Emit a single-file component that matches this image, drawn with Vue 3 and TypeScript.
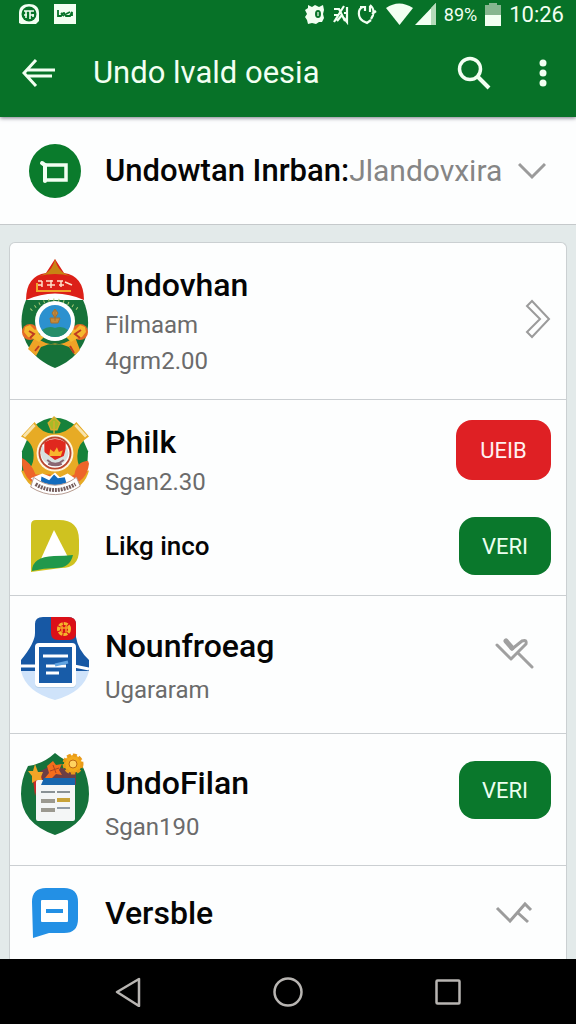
<script setup lang="ts">
import { ref } from 'vue'

const title = 'Undo lvald oesia'
const expanded = ref(false)
const first = { title: 'Undovhan', lines: ['Filmaam', '4grm2.00'] }
</script>

<template>
  <div class="screen">
    <header class="top">
      <div class="status">
        <div class="status-group">
          <svg width="22" height="22" viewBox="0 0 22 22">
            <path d="M1 20V10C1 4 5 1 11 1s10 3 10 9v8l-3 3H3z" fill="#f2fff2" />
            <circle cx="11" cy="11" r="7.5" fill="#077329" />
            <path d="M6 8h10M8 8v7M12 8v8M15 11v3M6 12h3M12 12h4" stroke="#f2fff2" stroke-width="1.6" fill="none" />
          </svg>
          <svg width="22" height="20" viewBox="0 0 22 20">
            <path d="M0 0h22v20H0z" fill="#f2fff2" />
            <path d="M4 6v6h3q2-3 3-3l2 3h4l2-4v4M7 9l3 3M12 10l4-2" stroke="#077329" stroke-width="1.8" fill="none" />
          </svg>
        </div>
        <div class="status-group right">
          <svg width="20" height="22" viewBox="0 0 20 22">
            <path d="M3 2l4 2 3-2 4 2 4-2 1 5-1 4 1 4-2 4-3 0-3 2-4-1-4 1-1-4-2-3 2-3-2-4 3-2z" fill="#f2fff2" />
            <ellipse cx="13" cy="11" rx="3" ry="4" fill="#077329" /><path d="M13 9v4" stroke="#b5dcbc" stroke-width="1.6" />
          </svg>
          <svg width="16" height="22" viewBox="0 0 16 22">
            <path d="M1 6h5l6 12M1 19L11 3M1 12h5M4 18l5-6M14 4v15l-3-4M11 10h3" stroke="#f2fff2" stroke-width="2.2" fill="none" />
          </svg>
          <svg width="21" height="22" viewBox="0 0 21 22">
            <path d="M6 4C0 6 1 15 6 18l4 2 4-3M3 4h5v4M13 2c5 4 4 10 1 14M13 3v6M19 8l-4 3" stroke="#f2fff2" stroke-width="2.2" fill="none" />
          </svg>
          <svg class="wifi" width="27" height="22" viewBox="0 0 27 22"><path d="M0 5Q13-4 27 5L13.500 22z" fill="#f2fff2" /></svg>
          <svg width="21" height="22" viewBox="0 0 21 22">
            <path d="M0 22L21 0v22z" fill="#f2fff2" /><path d="M16 5l5-5v22h-5z" fill="#b4dbb9" />
          </svg>
          <span class="battery-text">89%</span>
          <svg width="16" height="23" viewBox="0 0 16 23">
            <path d="M0 2h4V0h8v2h4v11H0z" fill="#86b68f" /><path d="M0 12h16v11H0z" fill="#f2fff2" />
          </svg>
          <time>10:26</time>
        </div>
      </div>
      <div class="bar">
        <button class="plain back" aria-label="Back">
          <svg width="34" height="30" viewBox="0 0 34 30">
            <path d="M14 2L2 15l12 13M4 12h29M4 18h26" fill="none" stroke="#f2fff2" stroke-width="3" />
          </svg>
        </button>
        <h1>{{ title }}</h1>
        <button class="plain" aria-label="Search">
          <svg width="34" height="34" viewBox="0 0 34 34">
            <circle cx="13" cy="13" r="10.500" fill="none" stroke="#f2fff2" stroke-width="3.500" />
            <path d="M20 20l12 12" stroke="#f2fff2" stroke-width="4" />
          </svg>
        </button>
        <button class="plain more" aria-label="More options">
          <svg width="8" height="28" viewBox="0 0 8 28">
            <g fill="#f2fff2"><circle cx="4" cy="4" r="3.500" /><circle cx="4" cy="14" r="3.500" /><circle cx="4" cy="24" r="3.500" /></g>
          </svg>
        </button>
      </div>
    </header>

    <button class="selector" :aria-expanded="expanded" @click="expanded = !expanded">
      <svg width="52" height="54" viewBox="0 0 52 54">
        <ellipse cx="26" cy="27" rx="26" ry="27" fill="#0a7b2c" />
        <path d="M16 21h21v15H16z" fill="none" stroke="#f2fff2" stroke-width="3.500" />
        <path d="M13 19l3 2v16" fill="none" stroke="#f2fff2" stroke-width="4" stroke-linecap="round" />
      </svg>
      <span class="selector-text"><span class="strong">Undowtan Inrban:</span>Jlandovxira</span>
      <svg class="caret" width="28" height="18" viewBox="0 0 28 18">
        <path d="M1 2l13 13L27 2" fill="none" stroke="#9b9b9b" stroke-width="3" />
      </svg>
    </button>

    <main class="content">
      <ul class="card">
        <li class="row">
          <div class="entry">
            <svg class="icon" width="68" height="109" viewBox="0 0 68 109">
              <path d="M5 41C-6 67 3 97 34 109C65 97 74 67 62 41z" fill="#167239" />
              <path d="M5 41Q5 17 25 14L34 0l9 14q20 3 20 27-29-13-58 0z" fill="#dc2018" />
              <path d="M18 17q13-3 16-17 3 14 16 17-16-4-32 0z" fill="#c78314" />
              <path d="M17 22h4M17 26h4M21 22v6M25 22h7M26 26h8M30 21v8M36 22h6M38 26h5M40 22v6M44 23l7 3" stroke="#ffe0c9" stroke-width="1.5" />
              <path d="M16 24v8h34" fill="none" stroke="#f1a62b" stroke-width="2" />
              <path d="M10 51q22-20 48 0" fill="none" stroke="#b2cd78" stroke-width="3" stroke-dasharray="1 4" />
              <path d="M14 78q20 15 40 0l5 13-5 5-6-8q-14-7-28 0l-5 9-8-7z" fill="#efa326" />
              <circle cx="9" cy="73" r="8" fill="#e56a25" /><circle cx="59" cy="73" r="8" fill="#e56a25" />
              <path d="M4 68l5-2 5 5 3-2 1 6 5 3-5 5-5-3-6-2-4-5zM64 68l-5-2-5 5-3-2-1 6-5 3 5 5 5-3 6-2 4-5z" fill="#f4b82f" />
              <path d="M8 72l5 3-4 4M60 71l-6 4 5 4M18 87l-4 5M49 87l4 7" stroke="#bf3b21" stroke-width="2" fill="none" />
              <circle cx="34" cy="62" r="20" fill="#fff" /><circle cx="34" cy="62" r="16" fill="#2c91cf" />
              <path d="M21 71q7-5 13-2 7-3 13 2-4 7-13 7t-13-7z" fill="#258d69" />
              <path d="M34 51v11M29 59h10l-2 5h-7zM31 54l3-4 3 4-3 5z" fill="#c58b3b" stroke="#a47030" stroke-width="1" />
            </svg>
            <div class="text">
              <h2>{{ first.title }}</h2>
              <p v-for="line in first.lines" :key="line">{{ line }}</p>
            </div>
            <button class="plain arrow next" aria-label="Open Undovhan">
              <svg width="26" height="40" viewBox="0 0 26 40">
                <path d="M7 2L24 20 7 38l-5-5 13-13L2 7z" fill="none" stroke="#9b9b9b" stroke-width="2" />
              </svg>
            </button>
          </div>
        </li>

        <li class="row">
          <div class="entry">
            <svg class="icon" width="68" height="80" viewBox="0 0 70 80">
              <path d="M12 10Q35-9 58 10l11 25-1 20-9 13H11L1 55V35z" fill="#16823b" />
              <path d="M14 5q7 12 20 12T57 5L70 20Q58 27 58 40q0 16 12 15-4 16-21 22H21Q5 70 0 55q13 1 13-16Q13 26 0 20z" fill="#e7ab25" />
              <path d="M14 8L3 20M56 8l11 12" stroke="#f8e4ac" stroke-width="3" />
              <path d="M1 42q9 4 14 17h16l-5 8-16-1Q0 57 1 42zM69 45q-12 1-14 14l-10 5 4 6q19-3 21-22z" fill="#ee6429" />
              <path d="M28 6l6-6 6 6-3 7h-6zM34 4v13" fill="#a9ba27" stroke="#d8ad2d" stroke-width="1.5" />
              <path d="M10 63l12-5 8 3 5-4 5 5 8-4 9 6-12 9H21z" fill="#fff" />
              <path d="M21 61l8 4 5-6 4 4 7-1 3 10H20z" fill="#126bbd" />
              <circle cx="35" cy="37" r="19" fill="#fff5dd" /><circle cx="35" cy="37" r="16" fill="#fff" stroke="#ba4730" stroke-width="2" />
              <path d="M24 26q11-7 22 0v17q-11 4-22 0z" fill="#e0281e" /><path d="M30 33l4 3 3-5 2 5 4-2-2 6H29z" fill="#f8b52d" />
              <path d="M24 36q-1-7-2-8l-2 9q2 11 12 12h8q8-3 9-12l-2-7-3 10-9 4z" fill="#d7e0df" />
              <path d="M27 44q8 8 17 0M28 48q8 3 14 0" fill="none" stroke="#8a6672" stroke-width="2" />
              <path d="M13 62q22 16 44 0l4 9q-25 17-51 1z" fill="#fff" stroke="#b59a91" />
              <path d="M15 69q20 12 41 0" fill="none" stroke="#745d5c" stroke-width="4" stroke-dasharray="2 1" />
            </svg>
            <div class="text">
              <h2>Philk</h2>
              <p>Sgan2.30</p>
            </div>
            <button class="pill danger">UEIB</button>
          </div>
          <div class="entry centered">
            <svg class="icon" width="48" height="52" viewBox="0 0 48 52">
              <path d="M0 5q0-5 5-5h23q20 0 20 20v10q0 18-18 18L0 52z" fill="#cfc220" />
              <path d="M23 10L39 41H9z" fill="#fff" /><path d="M1 51q0-14 22-15 11 0 19-1-3 13-17 13-12 0-24 3z" fill="#21984b" />
            </svg>
            <div class="text"><h3>Likg inco</h3></div>
            <button class="pill">VERI</button>
          </div>
        </li>

        <li class="row tall">
          <div class="entry roomy">
            <svg class="icon" width="68" height="84" viewBox="0 0 68 84">
              <path d="M0 55h68Q63 76 34 84 5 76 0 55z" fill="#cfe3fa" />
              <path d="M14 8q0-7 8-7h25q8 0 8 8v12q2 13 13 23v11H0V44q14-17 14-27z" fill="#1758a4" />
              <path d="M0 50l15 0M53 50l15 3" stroke="#fff" stroke-width="3" />
              <path d="M30 1h17q8 0 8 7v9q0 7-7 7H37q-7 0-7-7z" fill="#db1018" />
              <circle cx="43" cy="13" r="5.500" fill="none" stroke="#f5b52b" stroke-width="3" stroke-dasharray="4 1" /><path d="M39 12h8M41 10v6M45 10v6" stroke="#f5a126" stroke-width="1.5" />
              <rect x="14" y="29" width="41" height="43" rx="4" fill="#b4cfe9" />
              <rect x="16" y="29" width="37" height="40" rx="2" fill="#185ca8" stroke="#fff" stroke-width="4" />
              <path d="M22 40h25M25 50h20M25 57h13" stroke="#fff" stroke-width="3" /><path d="M34 49l13-3" stroke="#61a4e1" stroke-width="3" />
            </svg>
            <div class="text">
              <h2>Nounfroeag</h2>
              <p>Ugararam</p>
            </div>
            <button class="plain arrow" aria-label="Toggle Nounfroeag">
              <svg width="40" height="34" viewBox="0 0 40 34">
                <g fill="none" stroke="#a0a0a0" stroke-width="3" stroke-linecap="round" stroke-linejoin="round">
                  <path d="M2 9l14 14L31 8q1-5-4-3L17 13M23 17l14 14" /><path d="M11 5l6 7" stroke-width="5" />
                </g>
              </svg>
            </button>
          </div>
        </li>

        <li class="row compact">
          <div class="entry roomy">
            <svg class="icon" width="68" height="82" viewBox="0 0 68 82">
              <path d="M34 0q13 11 27 12 7 14 7 29 0 29-34 41Q0 70 0 41q0-15 7-28Q22 11 34 0z" fill="#15723b" />
              <path d="M18 19l13-7 24 7v13H18z" fill="#6c3f45" />
              <path d="M12 26l9-3 1 17-6-5-2 8z" fill="#c92a28" />
              <path d="M14 11l3 8 5 0-2 5 2 6-6-3-5 3v-7l-4-5 5 0z" fill="#f1a427" />
              <path d="M26 13l6-5 3 4 6-1-3 6 3 5-6-1-5 5-6-1 4-5z" fill="#f46d1b" />
              <path d="M29 18l9-3M32 12l3 8" stroke="#aa4422" stroke-width="1" />
              <circle cx="52" cy="11" r="9" fill="#f3aa1b" stroke="#e99b1a" stroke-width="3" stroke-dasharray="4 2" /><circle cx="52" cy="11" r="4" fill="#ffd260" stroke="#bd6813" />
              <rect x="15" y="27" width="39" height="41" rx="2" fill="#f4f6f6" />
              <path d="M20 32l3-7h31v7z" fill="#1766ad" />
              <path d="M20 39h14M36 39h13" stroke="#8a9295" stroke-width="2" /><path d="M20 48h14M20 57h14" stroke="#9b9990" stroke-width="4" /><path d="M36 47h13" stroke="#c8a33a" stroke-width="4" /><path d="M36 55h13" stroke="#929da8" stroke-width="2" />
            </svg>
            <div class="text">
              <h2>UndoFilan</h2>
              <p>Sgan190</p>
            </div>
            <button class="pill">VERI</button>
          </div>
        </li>

        <li class="row last">
          <div class="entry centered">
            <svg class="icon" width="46" height="50" viewBox="0 0 46 50">
              <path d="M0 14Q0 0 14 0h18q14 0 14 14v17q0 14-14 14H17L1 50z" fill="#2390e5" />
              <rect x="9" y="12" width="27" height="22" rx="1" fill="#fff" /><path d="M14 23h17" stroke="#2390e5" stroke-width="4" />
            </svg>
            <div class="text"><h2>Versble</h2></div>
            <button class="plain arrow" aria-label="Toggle Versble">
              <svg width="40" height="24" viewBox="0 0 40 24">
                <path d="M2 7l13 13L30 3l6 6M23 12l10 9" fill="none" stroke="#9c9c9c" stroke-width="3" />
              </svg>
            </button>
          </div>
        </li>
      </ul>
    </main>

    <nav class="system">
      <button class="plain" aria-label="Back">
        <svg width="26" height="30" viewBox="0 0 26 30"><path d="M24 2v27L2 15z" fill="none" stroke="#b8b5b2" stroke-width="2.500" stroke-linejoin="round" /></svg>
      </button>
      <button class="plain" aria-label="Home">
        <svg width="30" height="30" viewBox="0 0 30 30"><circle cx="15" cy="15" r="13.500" fill="none" stroke="#b8b5b2" stroke-width="2.500" /></svg>
      </button>
      <button class="plain" aria-label="Recent apps">
        <svg width="26" height="26" viewBox="0 0 26 26"><rect x="1.500" y="1.500" width="23" height="23" rx="1" fill="none" stroke="#b8b5b2" stroke-width="2.500" /></svg>
      </button>
    </nav>
  </div>
</template>

<style>
body {
  margin: 0;
}
</style>

<style scoped>
.screen {
  display: flex;
  flex-direction: column;
  min-height: 100vh;
  background: #e3eaea;
  color: #050505;
  font-family: Roboto, "Liberation Sans", sans-serif;
}
h1, h2, h3, p, ul {
  margin: 0;
  padding: 0;
}
button {
  font-family: inherit;
  border: 0;
  cursor: pointer;
}
svg {
  display: block;
  flex: none;
}
.plain {
  display: flex;
  align-items: center;
  padding: 0;
  background: none;
}
.top {
  background: #077228;
  color: #f2fff2;
  box-shadow: 0 1px 4px #777785;
  z-index: 1;
}
.status {
  display: flex;
  justify-content: space-between;
  height: 28px;
  padding: 0 12px 0 18px;
}
.status-group {
  display: flex;
  align-items: center;
  gap: 14px;
}
.status-group.right {
  gap: 8px;
}
.wifi {
  margin-right: -6px;
}
.battery-text {
  font-size: 18px;
}
time {
  font-size: 22px;
}
.bar {
  display: flex;
  align-items: center;
  height: 89px;
  padding: 0 29px 0 22px;
}
.back {
  width: 71px;
}
h1 {
  flex: 1;
  font-size: 31px;
  font-weight: 400;
  white-space: nowrap;
}
.more {
  margin-left: 48px;
}
.selector {
  display: flex;
  align-items: center;
  gap: 24px;
  min-height: 108px;
  padding: 0 30px 0 29px;
  background: #fdfefe;
  border-bottom: 1px solid #c5c9cb;
  color: #050505;
  text-align: left;
}
.selector-text {
  flex: 1;
  min-width: 0;
  color: #858585;
  font-size: 30px;
  white-space: nowrap;
}
.strong {
  color: #050505;
  font-size: 31px;
  font-weight: 500;
}
.caret {
  margin-left: -12px;
}
.content {
  flex: 1;
  display: flex;
  padding: 17px 9px 0;
}
.card {
  flex: 1;
  list-style: none;
  background: #fdfefe;
  border: 1px solid #cbd0d2;
  border-bottom: 0;
  border-radius: 6px 6px 0 0;
}
.row {
  display: flex;
  flex-direction: column;
  gap: 17px;
  padding: 16px 15px 20px 11px;
  border-bottom: 1px solid #cbcfd2;
}
.row.tall {
  padding-top: 20px;
  padding-bottom: 25px;
}
.row.compact {
  padding-top: 19px;
}
.row.last {
  padding-top: 22px;
  border: 0;
}
.entry {
  display: grid;
  grid-template-columns: 68px 1fr auto;
  column-gap: 16px;
  align-items: start;
}
.icon {
  justify-self: center;
}
.text {
  padding-top: 4px;
}
h2 {
  font-size: 32px;
  font-weight: 500;
  line-height: 44px;
}
h3 {
  font-size: 26px;
  font-weight: 500;
  line-height: 44px;
}
p {
  color: #6b6b6b;
  font-size: 24px;
  line-height: 36px;
}
.pill {
  width: 92px;
  height: 58px;
  margin-top: 4px;
  border-radius: 16px;
  background: #0a782c;
  color: #ecfff0;
  font-size: 22px;
  font-weight: 400;
}
.danger {
  width: 95px;
  height: 60px;
  background: #df2024;
  color: #fff0f0;
}
.arrow {
  width: 56px;
  height: 58px;
}
.next {
  align-self: center;
  justify-content: flex-end;
}
.centered {
  align-items: center;
}
.centered .text {
  padding: 0;
}
.centered .pill {
  margin: 0;
}
.row.last .arrow {
  height: 50px;
}
.roomy h2 {
  line-height: 52px;
}
.roomy .pill,
.roomy .arrow {
  margin-top: 8px;
}
.system {
  display: flex;
  align-items: center;
  justify-content: space-between;
  height: 65px;
  padding: 0 20%;
  background: #000;
}
</style>
